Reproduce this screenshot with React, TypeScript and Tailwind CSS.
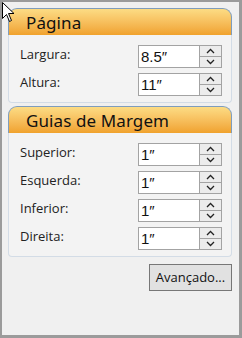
import React from "react";

const font = { fontFamily: '"Open Sans", "Noto Sans", sans-serif' };

function Spinner({ value }: { value: string }) {
  return (
    <div className="flex h-[23px]">
      <div className="w-[62px] h-full bg-white border border-[#a3a3a3] flex items-center pl-[2px] text-[15px] text-[#111] leading-none" style={{ fontFamily: '"Liberation Sans", sans-serif' }}>
        {value}
      </div>
      <div className="w-[22px] h-full flex flex-col border border-l-0 border-[#a3a3a3] bg-[#a3a3a3] gap-[1px]">
        <div className="flex-1 bg-[#ececec] flex items-center justify-center">
          <svg width="9" height="6" viewBox="0 0 9 6"><path d="M1 5 L4.5 1.5 L8 5" fill="none" stroke="#222" strokeWidth="1.3" /></svg>
        </div>
        <div className="flex-1 bg-[#ececec] flex items-center justify-center">
          <svg width="9" height="6" viewBox="0 0 9 6"><path d="M1 1 L4.5 4.5 L8 1" fill="none" stroke="#222" strokeWidth="1.3" /></svg>
        </div>
      </div>
    </div>
  );
}

function Row({ label, value }: { label: string; value: string }) {
  return (
    <div className="flex items-center justify-between">
      <span className="text-[13px] text-[#222] -mt-[3px]">{label}</span>
      <Spinner value={value} />
    </div>
  );
}

function Panel({ title, rows }: { title: string; rows: [string, string][] }) {
  return (
    <div className="flex flex-col">
      <div className="h-[27px] rounded-t-[9px] border border-b-0 border-[#7f9dbd] bg-gradient-to-b from-[#fcdc84] to-[#f0a22c] flex items-center pl-[17px]">
        <span className="text-[17px] text-[#111] tracking-[0.1px] leading-none" style={{ fontFamily: '"Noto Sans", sans-serif' }}>{title}</span>
      </div>
      <div className="border border-t-0 border-[#d3dce6] rounded-b-[4px] bg-[#f3f3f3] pl-[11px] pr-[9px] pt-[10px] pb-[6px] flex flex-col gap-[5px]">
        {rows.map(([l, v]) => (
          <Row key={l} label={l} value={v} />
        ))}
      </div>
    </div>
  );
}

export default function App() {
  return (
    <div className="relative w-[242px] h-[338px] bg-[#f0f0f0] border-[#9b9b9b] border-l-2 border-t-2 border-r-[3px] border-b-[3px] overflow-hidden" style={font}>
      <div className="pl-[6px] pr-[7px] pt-[6px] flex flex-col gap-[3px]">
        <Panel title="Página" rows={[["Largura:", "8.5″"], ["Altura:", "11″"]]} />
        <Panel title="Guias de Margem" rows={[["Superior:", "1″"], ["Esquerda:", "1″"], ["Inferior:", "1″"], ["Direita:", "1″"]]} />
        <div className="flex justify-end mt-[4px]">
          <button className="w-[83px] h-[27px] border border-[#777] bg-[#e1e1e1] text-[13px] text-[#111]">Avançado...</button>
        </div>
      </div>
      <svg className="absolute left-0 top-0" width="13" height="21" viewBox="0 0 13 21">
        <path d="M0.5 0.5 L0.5 16.5 L4.5 12.5 L7.5 19.5 L9.5 18.5 L6.5 11.5 L12 11.5 Z" fill="#fff" stroke="#000" strokeWidth="1" />
      </svg>
    </div>
  );
}
